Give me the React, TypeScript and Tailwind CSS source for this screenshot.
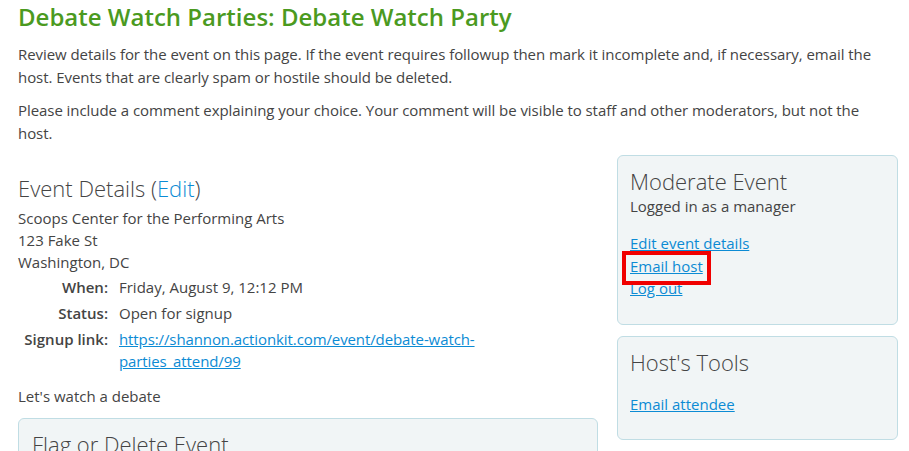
import React from "react";

export default function App() {
  return (
    <div className="bg-white text-[#444] w-[909px] h-[451px] overflow-hidden" style={{ fontFamily: '"Open Sans", sans-serif' }}>
      <div className="pl-[18px] pr-[11px]">
        <h1 className="text-[24px] font-semibold text-[#4b9a1f] leading-[30px] pt-[2px]">Debate Watch Parties: Debate Watch Party</h1>
        <p className="text-[15px] leading-[23px] mt-[11px] tracking-[-0.06px] w-[860px]">Review details for the event on this page. If the event requires followup then mark it incomplete and, if necessary, email the host. Events that are clearly spam or hostile should be deleted.</p>
        <p className="text-[15px] leading-[23px] mt-[10px] tracking-[-0.06px] w-[860px]">Please include a comment explaining your choice. Your comment will be visible to staff and other moderators, but not the host.</p>
        <div className="flex gap-[19px] mt-[10px]">
          <div className="w-[580px] shrink-0">
            <h2 className="text-[22px] font-light leading-[30px] mt-[18px]">Event Details (<a className="text-[#0c8bd4]">Edit</a>)</h2>
            <div className="text-[15px] leading-[22px] mt-[4px]">
              <div>Scoops Center for the Performing Arts</div>
              <div>123 Fake St</div>
              <div>Washington, DC</div>
            </div>
            <div className="text-[15px] leading-[22px] mt-[3px] flex flex-col gap-[4px]">
              <div className="flex"><div className="w-[90px] text-right font-semibold">When:</div><div className="ml-[11px]">Friday, August 9, 12:12 PM</div></div>
              <div className="flex"><div className="w-[90px] text-right font-semibold">Status:</div><div className="ml-[11px]">Open for signup</div></div>
              <div className="flex"><div className="w-[90px] text-right font-semibold">Signup link:</div><div className="ml-[11px] w-[370px]"><a className="text-[#0c8bd4] underline tracking-[-0.1px]">https://shannon.actionkit.com/event/debate-watch-parties_attend/99</a></div></div>
            </div>
            <p className="text-[15px] leading-[22px] mt-[13px]">Let's watch a debate</p>
            <div className="mt-[11px] border border-[#c0dde4] bg-[#f1f5f6] rounded-[6px] px-[13px] pt-[10px] h-[60px]">
              <h2 className="text-[22px] font-light leading-[30px]">Flag or Delete Event</h2>
            </div>
          </div>
          <div className="w-[281px] shrink-0 flex flex-col gap-[11px]">
            <div className="border border-[#c0dde4] bg-[#f1f5f6] rounded-[6px] px-[12px] pt-[10px] h-[170px]">
              <h2 className="text-[22px] font-light leading-[30px]">Moderate Event</h2>
              <div className="text-[15px] leading-[22px] -mt-[1px]">Logged in as a manager</div>
              <div className="text-[15px] leading-[22.5px] mt-[15px] flex flex-col items-start">
                <a className="text-[#0c8bd4] underline">Edit event details</a>
                <a className="text-[#0c8bd4] underline relative">Email host<span className="absolute left-[-8px] top-[-4px] w-[89px] h-[34px] border-[4px] border-[#f00000]"></span></a>
                <a className="text-[#0c8bd4] underline">Log out</a>
              </div>
            </div>
            <div className="border border-[#c0dde4] bg-[#f1f5f6] rounded-[6px] px-[12px] pt-[10px] h-[104px]">
              <h2 className="text-[22px] font-light leading-[30px]">Host's Tools</h2>
              <div className="text-[15px] leading-[22px] mt-[16px]"><a className="text-[#0c8bd4] underline">Email attendee</a></div>
            </div>
          </div>
        </div>
      </div>
    </div>
  );
}
